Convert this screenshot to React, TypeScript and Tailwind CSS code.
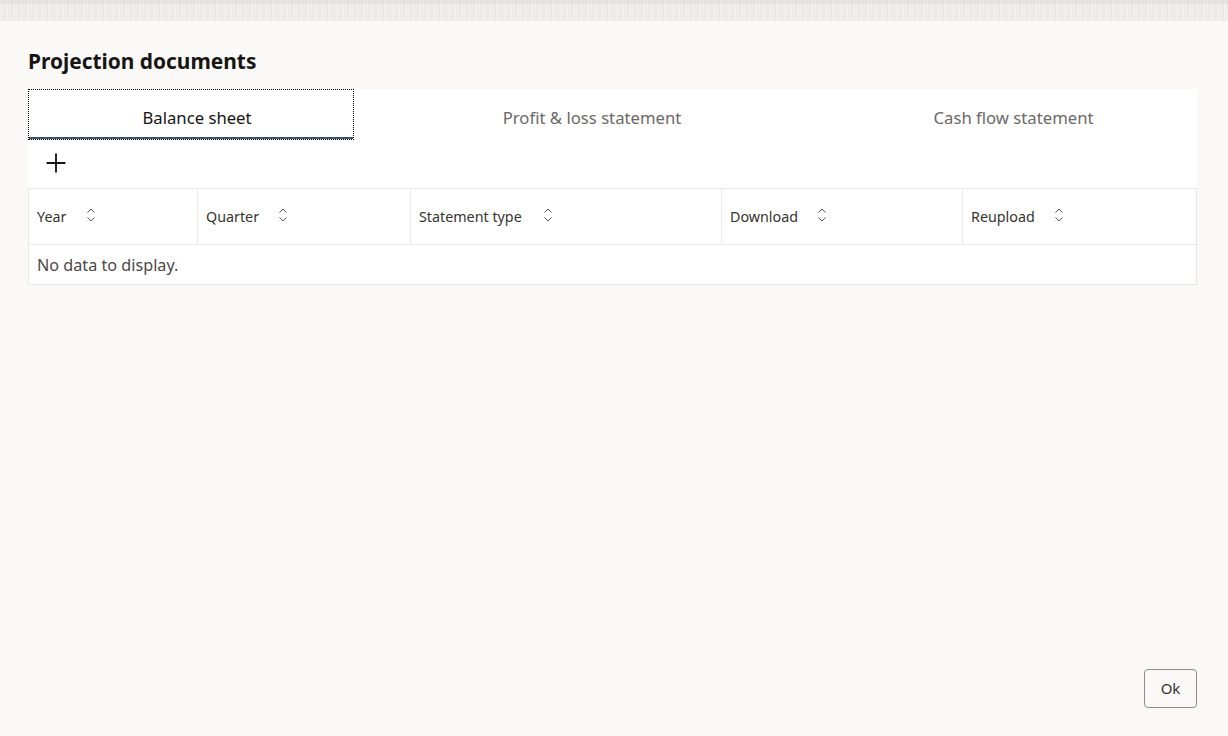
import { Plus } from 'lucide-react'

const columns = [
  { label: 'Year', width: 'w-[168px]', gap: 'ml-[20px]' },
  { label: 'Quarter', width: 'w-[213px]', gap: 'ml-[19px]' },
  { label: 'Statement type', width: 'w-[311px]', gap: 'ml-[21px]' },
  { label: 'Download', width: 'w-[241px]', gap: 'ml-[19px]' },
  { label: 'Reupload', width: 'flex-1', gap: 'ml-[19px]' },
]

function SortIcon({ className }: { className: string }) {
  return (
    <svg viewBox="0 0 10 14" className={`h-[14px] w-[10px] -translate-y-[2px] text-[#55524e] ${className}`} fill="none" stroke="currentColor" strokeWidth="1">
      <path d="M1.5 4.5 5 1l3.5 3.5" />
      <path d="M1.5 9.5 5 13l3.5-3.5" />
    </svg>
  )
}

export default function App() {
  return (
    <div className="flex h-[736px] flex-col overflow-hidden bg-[#faf9f7] font-['Noto_Sans',sans-serif] text-[#161513]">
      {/* Strip of the page behind the dialog */}
      <div className="h-[21px] shrink-0 bg-[#eeedeb] bg-[repeating-linear-gradient(90deg,#f6f5f3_0px,#e9e8e6_2px,#f3f2f0_3px,#e6e5e3_5px,#f4f3f1_7px)]">
        <div className="h-[4px] bg-[#dddcda] opacity-60" />
      </div>

      <main className="flex flex-1 flex-col pb-[28px] pl-[28px] pr-[31px]">
        <h1 className="mt-[25px] h-[43px] text-[20.9px] font-bold leading-[30px]">Projection documents</h1>

        {/* Tabs */}
        <div className="flex h-[51px] bg-white text-[16.7px]">
          <div className="flex w-[326px] items-center justify-center border border-dotted border-black pl-[12px] pt-[6px] shadow-[inset_0_-2px_0_#3f4f75]">
            Balance sheet
          </div>
          <div className="flex w-[476px] items-center justify-center pt-[7px] text-[#6b6966]">Profit &amp; loss statement</div>
          <div className="flex flex-1 items-center justify-center pt-[7px] text-[#6b6966]">Cash flow statement</div>
        </div>

        {/* Toolbar */}
        <div className="flex h-[48px] items-center bg-white pb-[2px] pl-[13px]">
          <Plus className="h-[30px] w-[30px] text-[#161513]" strokeWidth={1.5} />
        </div>

        {/* Table */}
        <div className="border border-[#e8e7e5] bg-white">
          <div className="flex h-[56px] border-b border-[#e8e7e5] text-[14.3px] text-[#35332f]">
            {columns.map((col, i) => (
              <div key={col.label} className={`flex items-center pl-[8px] ${col.width} ${i > 0 ? 'border-l border-[#ecebe9]' : ''}`}>
                <span>{col.label}</span>
                <SortIcon className={col.gap} />
              </div>
            ))}
          </div>
          <div className="flex h-[39px] items-center pl-[8px] pt-[1px] text-[16.2px] text-[#4a4845]">No data to display.</div>
        </div>

        <div className="mt-auto flex justify-end">
          <button className="h-[39px] w-[53px] rounded-[4px] border border-[#8f8d8a] text-[15px] text-[#35332f]">Ok</button>
        </div>
      </main>
    </div>
  )
}
